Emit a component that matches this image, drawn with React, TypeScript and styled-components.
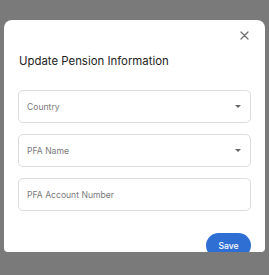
import styled, { createGlobalStyle } from 'styled-components'

const GlobalStyle = createGlobalStyle`
  html, body {
    margin: 0;
    padding: 0;
    background: #7a7a7a;
    font-family: Inter, 'Liberation Sans', sans-serif;
  }
`

// ── Layout ───────────────────────────────────────────────────────────────────

const Overlay = styled.div`
  width: 269px;
  height: 275px;
  padding: 20px 4px 0 4px;
  box-sizing: border-box;
  background: #7a7a7a;
`

const Modal = styled.div`
  height: 232px;
  background: #ffffff;
  border-radius: 8px 8px 4px 4px;
  overflow: hidden;
  padding: 11px 14px 0 14px;
  box-sizing: border-box;
  display: flex;
  flex-direction: column;
`

const CloseRow = styled.div`
  display: flex;
  justify-content: flex-end;
  padding-right: 2px;
`

const CloseButton = styled.button`
  width: 9px;
  height: 9px;
  padding: 0;
  border: none;
  background: none;
  display: flex;
  cursor: pointer;
`

const Title = styled.h2`
  margin: 13px 0 0 1px;
  font-size: 11.4px;
  line-height: 16px;
  font-weight: 400;
  color: #222222;
`

const Form = styled.div`
  margin-top: 21px;
  display: flex;
  flex-direction: column;
  gap: 11px;
`

const Field = styled.div`
  height: 33px;
  border: 1px solid #dcdcdc;
  border-radius: 5px;
  box-sizing: border-box;
  display: flex;
  align-items: center;
  justify-content: space-between;
  padding: 0 9px 0 8px;
`

const Placeholder = styled.span`
  font-size: 8.6px;
  color: #7a7a7a;
`

const Caret = styled.span`
  width: 0;
  height: 0;
  border-left: 3px solid transparent;
  border-right: 3px solid transparent;
  border-top: 3px solid #666666;
`

const Footer = styled.div`
  margin-top: 22px;
  display: flex;
  justify-content: flex-end;
`

const SaveButton = styled.button`
  width: 45px;
  height: 25px;
  border: none;
  border-radius: 13px;
  background: #2f6fd3;
  color: #ffffff;
  font-family: Inter, 'Liberation Sans', sans-serif;
  font-size: 8.6px;
  font-weight: 500;
  padding: 0;
  cursor: pointer;
`

const FIELDS = [
  { label: 'Country', select: true },
  { label: 'PFA Name', select: true },
  { label: 'PFA Account Number', select: false },
]

export default function App() {
  return (
    <>
      <GlobalStyle />
      <Overlay>
        <Modal>
          <CloseRow>
            <CloseButton aria-label="Close">
              <svg width="9" height="9" viewBox="0 0 9 9">
                <path d="M1 1 L8 8 M8 1 L1 8" stroke="#6b6b6b" strokeWidth="1.2" strokeLinecap="round" />
              </svg>
            </CloseButton>
          </CloseRow>
          <Title>Update Pension Information</Title>
          <Form>
            {FIELDS.map(f => (
              <Field key={f.label}>
                <Placeholder>{f.label}</Placeholder>
                {f.select && <Caret />}
              </Field>
            ))}
          </Form>
          <Footer>
            <SaveButton>Save</SaveButton>
          </Footer>
        </Modal>
      </Overlay>
    </>
  )
}
